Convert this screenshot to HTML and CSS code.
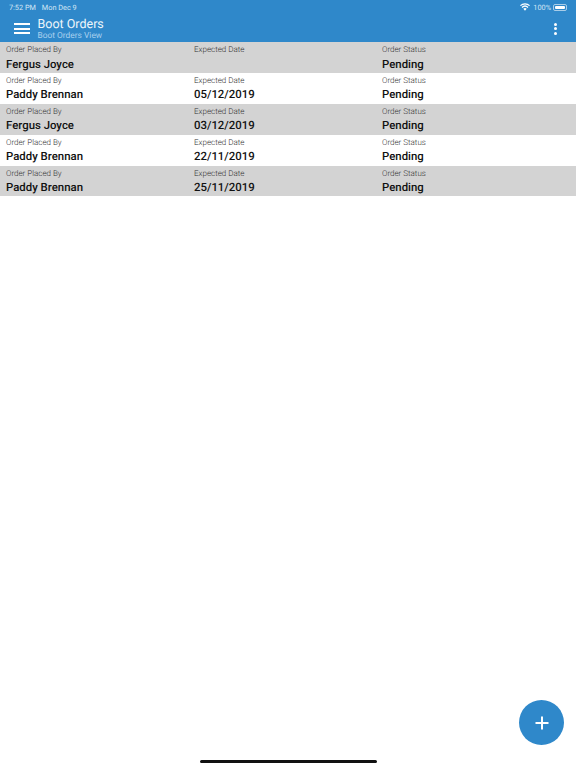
FILE: index.html
```html
<!DOCTYPE html>
<html lang="en">
<head>
    <meta charset="UTF-8">
    <meta name="viewport" content="width=device-width, initial-scale=1.0">
    <title>Boot Orders</title>
    <link rel="stylesheet" href="styles.css">
</head>
<body>
    <!-- Header -->
    <header class="app-header">
        <div class="status-bar">
            <span class="status-time">7:52 PM</span>
            <span class="status-date">Mon Dec 9</span>
            <span class="status-right">
                <svg class="wifi-icon" width="10" height="8" viewBox="0 0 20 15">
                    <path fill="#fff" d="M10 15 L6.6 11.2 A5 5 0 0 1 13.4 11.2 Z M4.9 9.3 L3.1 7.3 A10.2 10.2 0 0 1 16.9 7.3 L15.1 9.3 A7.6 7.6 0 0 0 4.9 9.3 Z M1.7 5.7 L0 3.8 A14.8 14.8 0 0 1 20 3.8 L18.3 5.7 A12.3 12.3 0 0 0 1.7 5.7 Z"/>
                </svg>
                <span class="status-battery-text">100%</span>
                <span class="battery"><span class="battery-fill"></span></span>
            </span>
        </div>
        <div class="toolbar">
            <button class="menu-btn" aria-label="Menu">
                <span></span><span></span><span></span>
            </button>
            <div class="toolbar-titles">
                <div class="toolbar-title">Boot Orders</div>
                <div class="toolbar-subtitle">Boot Orders View</div>
            </div>
            <button class="more-btn" aria-label="More">
                <span></span><span></span><span></span>
            </button>
        </div>
    </header>

    <!-- Orders -->
    <div class="order-list">
        <div class="order-row">
            <div class="order-cell"><div class="cell-label">Order Placed By</div><div class="cell-value">Fergus Joyce</div></div>
            <div class="order-cell"><div class="cell-label">Expected Date</div><div class="cell-value"></div></div>
            <div class="order-cell"><div class="cell-label">Order Status</div><div class="cell-value">Pending</div></div>
        </div>
        <div class="order-row">
            <div class="order-cell"><div class="cell-label">Order Placed By</div><div class="cell-value">Paddy Brennan</div></div>
            <div class="order-cell"><div class="cell-label">Expected Date</div><div class="cell-value">05/12/2019</div></div>
            <div class="order-cell"><div class="cell-label">Order Status</div><div class="cell-value">Pending</div></div>
        </div>
        <div class="order-row">
            <div class="order-cell"><div class="cell-label">Order Placed By</div><div class="cell-value">Fergus Joyce</div></div>
            <div class="order-cell"><div class="cell-label">Expected Date</div><div class="cell-value">03/12/2019</div></div>
            <div class="order-cell"><div class="cell-label">Order Status</div><div class="cell-value">Pending</div></div>
        </div>
        <div class="order-row">
            <div class="order-cell"><div class="cell-label">Order Placed By</div><div class="cell-value">Paddy Brennan</div></div>
            <div class="order-cell"><div class="cell-label">Expected Date</div><div class="cell-value">22/11/2019</div></div>
            <div class="order-cell"><div class="cell-label">Order Status</div><div class="cell-value">Pending</div></div>
        </div>
        <div class="order-row">
            <div class="order-cell"><div class="cell-label">Order Placed By</div><div class="cell-value">Paddy Brennan</div></div>
            <div class="order-cell"><div class="cell-label">Expected Date</div><div class="cell-value">25/11/2019</div></div>
            <div class="order-cell"><div class="cell-label">Order Status</div><div class="cell-value">Pending</div></div>
        </div>
    </div>

    <!-- Add button -->
    <button class="fab" aria-label="Add">
        <svg width="14" height="14" viewBox="0 0 14 14">
            <path fill="none" stroke="#fff" stroke-width="2" d="M7 0.5 V13.5 M0.5 7 H13.5"/>
        </svg>
    </button>

    <div class="home-indicator"></div>
</body>
</html>
```

FILE: styles.css
```css
/* General Styles */
* {
    margin: 0;
    padding: 0;
    box-sizing: border-box;
}

html, body {
    height: 100%;
}

body {
    font-family: Roboto, Arial, sans-serif;
    background: #fff;
    color: #000;
    overflow: hidden;
    text-rendering: geometricPrecision;
}

button {
    border: none;
    background: none;
    cursor: pointer;
}

/* Header */
.app-header {
    height: 42px;
    background: #2f88ca;
    color: #fff;
}

.status-bar {
    display: flex;
    align-items: center;
    height: 14px;
    padding: 0 9px 0 9px;
    font-size: 7.3px;
    color: #d5e7f5;
}

.status-date {
    margin-left: 6px;
}

.status-right {
    display: flex;
    align-items: center;
    margin-left: auto;
}

.status-battery-text {
    margin-left: 3px;
}

.battery {
    width: 14px;
    height: 7px;
    margin-left: 2px;
    padding: 1px;
    border: 1px solid #a9cde8;
    border-radius: 2px;
}

.battery-fill {
    display: block;
    height: 100%;
    background: #fff;
    border-radius: 1px;
}

.toolbar {
    display: flex;
    align-items: center;
    height: 28px;
    padding: 1px 19px 0 14px;
}

.menu-btn {
    display: flex;
    flex-direction: column;
    gap: 2.5px;
    width: 16px;
}

.menu-btn span {
    height: 2px;
    background: #fff;
}

.toolbar-titles {
    margin-left: 7.5px;
}

.toolbar-title {
    font-size: 12.5px;
    line-height: 15px;
    color: #eef6fb;
}

.toolbar-subtitle {
    font-size: 8.4px;
    line-height: 9px;
    color: #a9d0ee;
}

.more-btn {
    display: flex;
    flex-direction: column;
    gap: 1.5px;
    margin-left: auto;
}

.more-btn span {
    width: 3px;
    height: 3px;
    background: #fff;
    border-radius: 50%;
}

/* Orders */
.order-row {
    display: grid;
    grid-template-columns: 188px 188px 1fr;
    height: 30.9px;
    padding: 2px 6px 0;
}

.order-row:nth-child(odd) {
    background: #d3d3d3;
}

.cell-label {
    font-size: 8px;
    font-weight: 300;
    line-height: 11px;
    color: #333;
}

.cell-value {
    margin-top: 1.5px;
    font-size: 11.4px;
    font-weight: 500;
    line-height: 14.5px;
    color: #111;
}

/* Add button */
.fab {
    position: fixed;
    left: 519px;
    top: 700px;
    display: flex;
    align-items: center;
    justify-content: center;
    width: 45px;
    height: 45px;
    background: #2f88ca;
    border-radius: 50%;
}

.home-indicator {
    position: fixed;
    left: 199.5px;
    top: 760px;
    width: 177.5px;
    height: 3px;
    background: #111;
    border-radius: 2px;
}
```
